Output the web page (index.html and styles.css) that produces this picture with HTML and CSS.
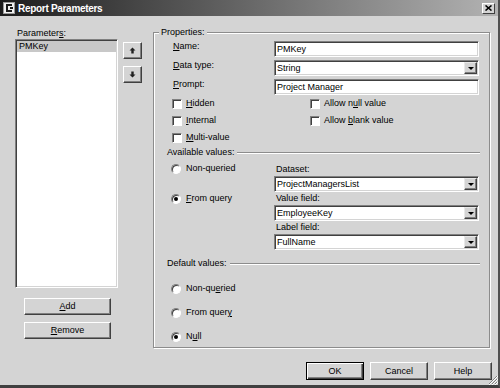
FILE: index.html
```html
<!DOCTYPE html>
<html lang="en">
  <head>
    <meta charset="UTF-8" />
    <meta name="viewport" content="width=device-width, initial-scale=1.0" />
    <title>Report Parameters</title>
    <link rel="stylesheet" href="styles.css">
  </head>
  <body>
    <div class="window">
      <!-- Title bar -->
      <div class="titlebar">
        <svg class="app-icon" width="12" height="12" viewBox="0 0 12 12">
          <rect x="0.5" y="0.5" width="11" height="11" fill="#f2f2f2" stroke="#9a9a9a" />
          <path d="M3 2h6v2H5v4h4v2H3z" fill="#1a1a1a" />
          <rect x="7" y="5" width="3" height="2" fill="#1a1a1a" />
        </svg>
        <span class="title">Report Parameters</span>
        <span class="close-btn">
          <svg width="7" height="6" viewBox="0 0 7 6">
            <path d="M0.5 0.5L6.5 5.5M6.5 0.5L0.5 5.5" stroke="#000" stroke-width="1.6" />
          </svg>
        </span>
      </div>

      <div class="dialog-body">
        <!-- Parameters list -->
        <div class="params-col">
          <div class="params-top">
            <div class="list-wrap">
              <div class="list-label">Parameter<u>s</u>:</div>
              <div class="listbox">
                <div class="list-item selected">PMKey</div>
              </div>
            </div>
            <div class="move-btns">
              <div class="btn arrow-btn">
                <svg width="7" height="7" viewBox="0 0 7 7"><path d="M3.5 0.5L6.5 3.5H4.7V6.5H2.3V3.5H0.5z" fill="#222" /></svg>
              </div>
              <div class="btn arrow-btn">
                <svg width="7" height="7" viewBox="0 0 7 7"><path d="M3.5 6.5L6.5 3.5H4.7V0.5H2.3V3.5H0.5z" fill="#222" /></svg>
              </div>
            </div>
          </div>
          <div class="list-actions">
            <div class="btn"><u>A</u>dd</div>
            <div class="btn"><u>R</u>emove</div>
          </div>
        </div>

        <!-- Properties group -->
        <div class="group">
          <div class="legend">Properties:</div>

          <div class="form-rows">
            <div class="form-row">
              <div class="form-label"><u>N</u>ame:</div>
              <div class="textbox">PMKey</div>
            </div>
            <div class="form-row">
              <div class="form-label"><u>D</u>ata type:</div>
              <div class="textbox select">
                <span class="select-text">String</span>
                <span class="drop-btn"><span class="tri"></span></span>
              </div>
            </div>
            <div class="form-row">
              <div class="form-label"><u>P</u>rompt:</div>
              <div class="textbox">Project Manager</div>
            </div>
          </div>

          <div class="checks">
            <div class="check"><span class="checkbox"></span><span><u>H</u>idden</span></div>
            <div class="check"><span class="checkbox"></span><span>Allow n<u>u</u>ll value</span></div>
            <div class="check"><span class="checkbox"></span><span><u>I</u>nternal</span></div>
            <div class="check"><span class="checkbox"></span><span>Allow <u>b</u>lank value</span></div>
            <div class="check"><span class="checkbox"></span><span><u>M</u>ulti-value</span></div>
          </div>

          <div class="section-heading">
            <span>Available values:</span>
            <span class="etched-line"></span>
          </div>

          <div class="avail">
            <div class="radio-list avail-radios">
              <div class="radio-row"><span class="radio"></span><span>Non-queried</span></div>
              <div class="radio-row"><span class="radio checked"><span class="dot"></span></span><span><u>F</u>rom query</span></div>
            </div>
            <div class="query-fields">
              <div class="field-label">Dataset:</div>
              <div class="textbox select">
                <span class="select-text">ProjectManagersList</span>
                <span class="drop-btn"><span class="tri"></span></span>
              </div>
              <div class="field-label">Value field:</div>
              <div class="textbox select">
                <span class="select-text">EmployeeKey</span>
                <span class="drop-btn"><span class="tri"></span></span>
              </div>
              <div class="field-label">Label field:</div>
              <div class="textbox select">
                <span class="select-text">FullName</span>
                <span class="drop-btn"><span class="tri"></span></span>
              </div>
            </div>
          </div>

          <div class="section-heading default-heading">
            <span>Default values:</span>
            <span class="etched-line"></span>
          </div>

          <div class="radio-list default-radios">
            <div class="radio-row"><span class="radio"></span><span>Non-qu<u>e</u>ried</span></div>
            <div class="radio-row"><span class="radio"></span><span>From quer<u>y</u></span></div>
            <div class="radio-row"><span class="radio checked"><span class="dot"></span></span><span>N<u>u</u>ll</span></div>
          </div>
        </div>
      </div>

      <!-- Dialog buttons -->
      <div class="footer">
        <div class="btn footer-btn default">OK</div>
        <div class="btn footer-btn">Cancel</div>
        <div class="btn footer-btn">Help</div>
      </div>

      <svg class="grip" width="10" height="10" viewBox="0 0 10 10">
        <path d="M9 1L1 9M9 4L4 9M9 7L7 9" stroke="#808080" stroke-width="1" />
        <path d="M10 1L1 10M10 4L4 10M10 7L7 10" stroke="#ffffff" stroke-width="1" />
      </svg>
    </div>
  </body>
</html>
```

FILE: styles.css
```css
* {
  margin: 0;
  padding: 0;
  box-sizing: border-box;
}
html,
body {
  width: 500px;
  height: 388px;
  overflow: hidden;
}
body {
  font-family: "Liberation Sans", Arial, sans-serif;
  font-size: 9px;
  line-height: 11px;
  color: #000;
  background: #d4d4d4;
}
u {
  text-underline-offset: 1px;
}
.window {
  position: relative;
  width: 500px;
  height: 388px;
  background: #d4d4d4;
  border-right: 2px solid #505050;
  border-bottom: 3px solid #404040;
  display: flex;
  flex-direction: column;
}
/* Title bar */
.titlebar {
  height: 16px;
  flex-shrink: 0;
  display: flex;
  align-items: center;
  padding-left: 3px;
  background: linear-gradient(to right, #1c1c1c 0%, #4a4a4a 30%, #b2b2b2 100%);
}
.app-icon {
  flex-shrink: 0;
}
.title {
  margin-left: 3px;
  color: #fff;
  font-weight: bold;
  font-size: 10px;
  letter-spacing: -0.3px;
}
.close-btn {
  margin-left: auto;
  margin-right: 3px;
  width: 13px;
  height: 11px;
  display: flex;
  align-items: center;
  justify-content: center;
  background: #d4d4d4;
  border: 1px solid;
  border-color: #fff #404040 #404040 #fff;
}
/* Shared 3D controls */
.btn {
  display: flex;
  align-items: center;
  justify-content: center;
  background: #d4d4d4;
  border: 1px solid;
  border-color: #fff #404040 #404040 #fff;
  box-shadow: inset -1px -1px 0 #808080;
}
.textbox {
  height: 16px;
  width: 205px;
  background: #fff;
  border: 1px solid;
  border-color: #808080 #fff #fff #808080;
  box-shadow: inset 1px 1px 0 #404040, inset -1px -1px 0 #d4d4d4;
  padding-left: 2px;
  line-height: 14px;
  white-space: nowrap;
}
.select {
  display: flex;
  padding-right: 1px;
  padding-top: 1px;
  padding-bottom: 1px;
  line-height: 12px;
}
.select-text {
  flex: 1;
}
.drop-btn {
  width: 13px;
  display: flex;
  align-items: center;
  justify-content: center;
  background: #d4d4d4;
  border: 1px solid;
  border-color: #e8e8e8 #404040 #404040 #e8e8e8;
  box-shadow: inset -1px -1px 0 #808080;
}
.tri {
  width: 0;
  height: 0;
  border-left: 3px solid transparent;
  border-right: 3px solid transparent;
  border-top: 3px solid #000;
}
.dialog-body {
  display: flex;
  align-items: flex-start;
  padding: 12px 0 0 15px;
}
/* Parameters column */
.params-col {
  width: 127px;
  flex-shrink: 0;
}
.params-top {
  display: flex;
  gap: 5px;
}
.list-wrap {
  width: 103px;
}
.list-label {
  padding-left: 2px;
  height: 11px;
}
.listbox {
  height: 249px;
  background: #fff;
  border: 1px solid;
  border-color: #808080 #fff #fff #808080;
  box-shadow: inset 1px 1px 0 #404040, inset -1px -1px 0 #d4d4d4;
  padding: 1px;
}
.list-item {
  padding-left: 2px;
  line-height: 11px;
}
.list-item.selected {
  background: #c8c8c8;
}
.move-btns {
  margin-top: 14px;
  display: flex;
  flex-direction: column;
  gap: 7px;
}
.arrow-btn {
  width: 19px;
  height: 17px;
}
.list-actions {
  margin-top: 10px;
  padding-left: 9px;
  display: flex;
  flex-direction: column;
  gap: 7px;
}
.list-actions .btn {
  width: 87px;
  height: 17px;
}
/* Properties group */
.group {
  margin-left: 11px;
  margin-top: 4px;
  width: 337px;
  border: 1px solid #8c8c8c;
  box-shadow: 1px 1px 0 #fff, inset 1px 1px 0 #fff;
  padding-bottom: 5px;
  display: flex;
  flex-direction: column;
}
.legend {
  align-self: flex-start;
  margin-top: -6px;
  margin-left: 5px;
  padding: 0 2px;
  height: 11px;
  background: #d4d4d4;
}
.form-rows {
  margin-top: 3px;
  display: flex;
  flex-direction: column;
  gap: 3px;
}
.form-row {
  display: flex;
  margin-left: 19px;
}
.form-label {
  width: 101px;
}
.checks {
  margin-top: 3px;
  margin-left: 18px;
  display: grid;
  grid-template-columns: 138px auto;
  row-gap: 6px;
}
.check {
  display: flex;
  align-items: center;
  gap: 4px;
  height: 11px;
}
.checkbox {
  width: 10px;
  height: 10px;
  background: #fff;
  border: 1px solid;
  border-color: #808080 #fff #fff #808080;
  box-shadow: inset 1px 1px 0 #404040;
}
.section-heading {
  margin-top: 4px;
  margin-left: 13px;
  margin-right: 9px;
  display: flex;
  align-items: center;
  height: 11px;
}
.etched-line {
  flex: 1;
  margin-left: 3px;
  height: 2px;
  border-top: 1px solid #8c8c8c;
  border-bottom: 1px solid #fff;
}
.avail {
  margin-top: 5px;
  display: flex;
}
.radio-list {
  margin-left: 17px;
  display: flex;
  flex-direction: column;
}
.avail-radios {
  width: 103px;
  gap: 19px;
}
.radio-row {
  display: flex;
  align-items: center;
  gap: 5px;
  height: 11px;
}
.radio {
  width: 10px;
  height: 10px;
  border-radius: 50%;
  background: #fff;
  border: 1px solid;
  border-color: #808080 #fff #fff #808080;
  box-shadow: inset 1px 1px 0 #404040;
  display: flex;
  align-items: center;
  justify-content: center;
}
.dot {
  width: 4px;
  height: 4px;
  border-radius: 50%;
  background: #000;
}
.query-fields {
  width: 205px;
}
.field-label {
  height: 13px;
  line-height: 13px;
  padding-left: 2px;
}
.default-heading {
  margin-top: 8px;
}
.default-radios {
  margin-top: 14px;
  gap: 13px;
}
/* Footer */
.footer {
  margin-top: 14px;
  display: flex;
  justify-content: flex-end;
  gap: 6px;
  padding-right: 6px;
}
.footer-btn {
  width: 58px;
  height: 18px;
}
.footer-btn.default {
  border: 1px solid #000;
  box-shadow: inset 1px 1px 0 #fff, inset -1px -1px 0 #404040, inset -2px -2px 0 #808080;
}
.grip {
  position: absolute;
  right: 0;
  bottom: 0;
}
```
